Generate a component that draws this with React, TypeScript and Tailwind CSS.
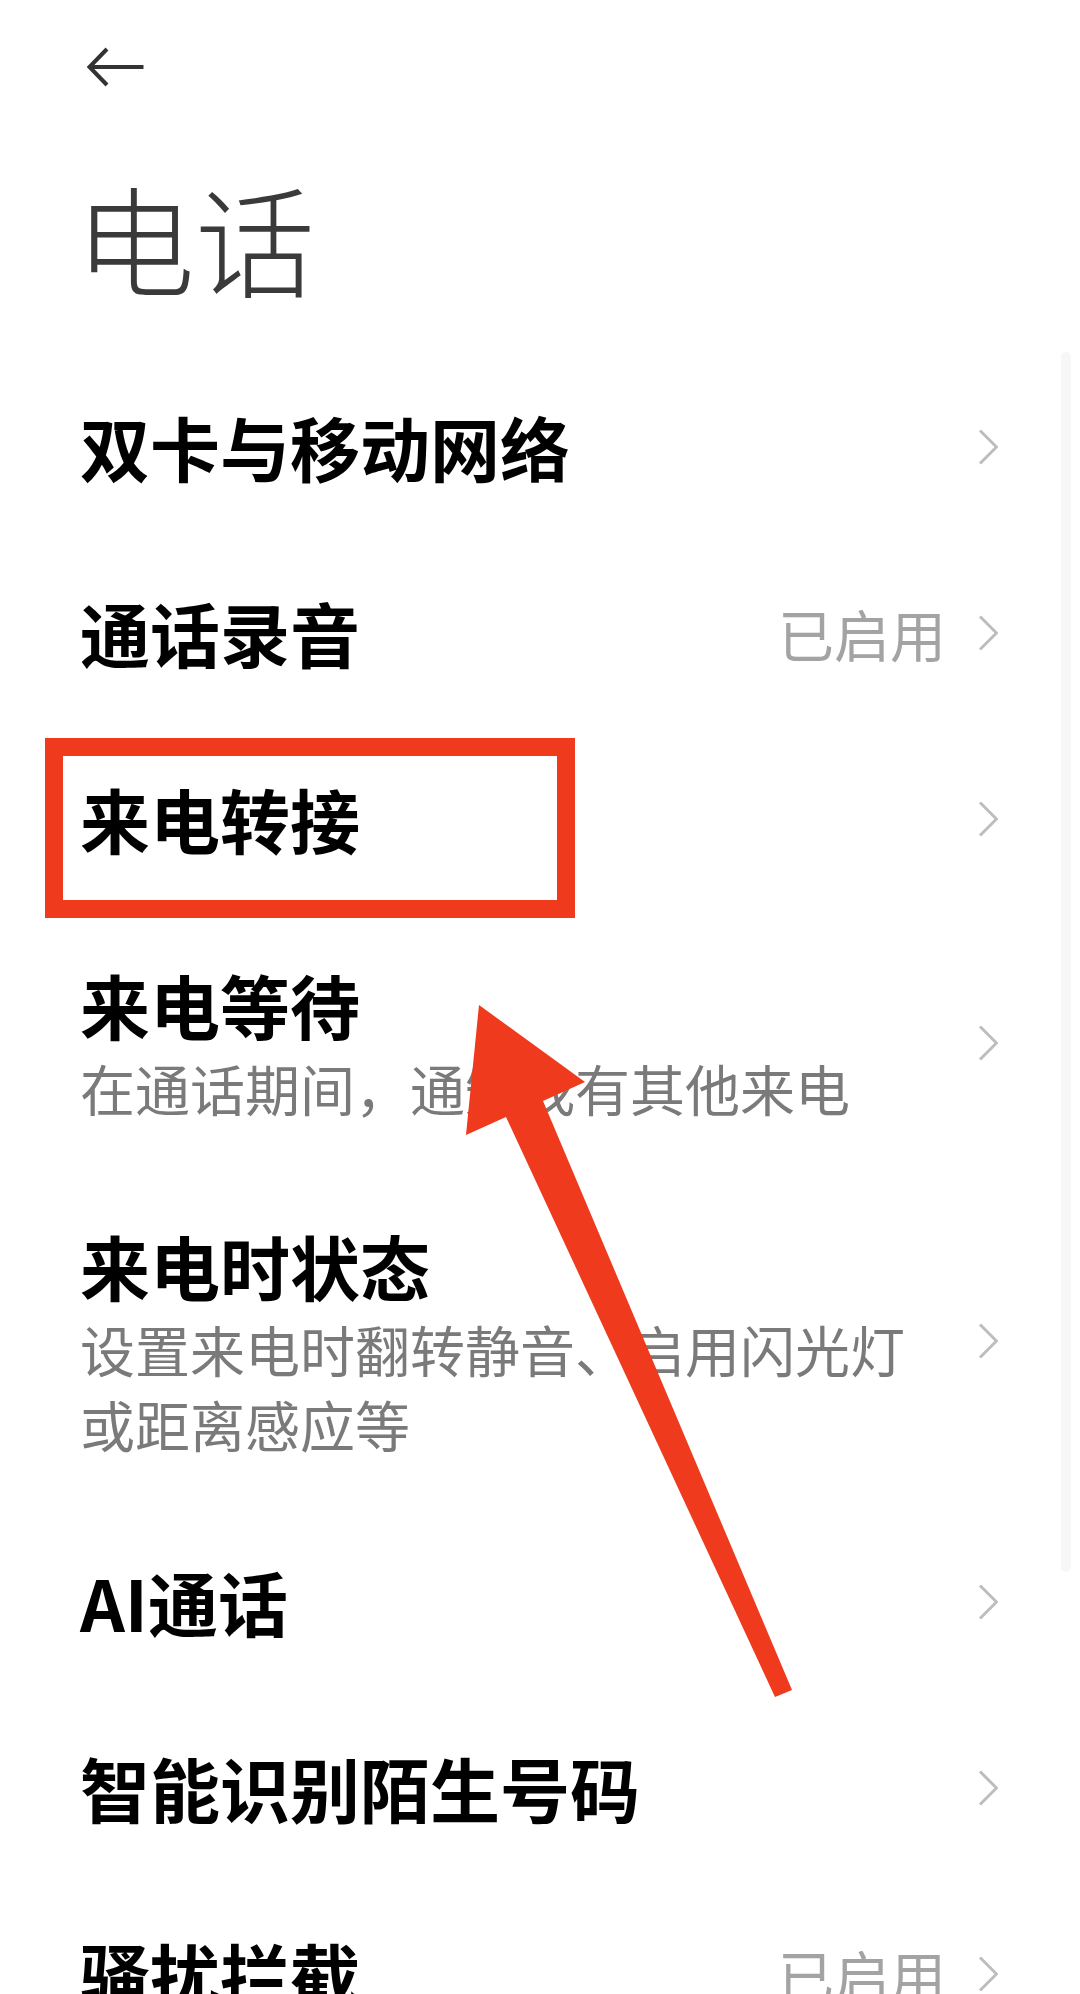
import React from "react";

type Row = { title: string; value?: string; sub?: string };

const rows: Row[] = [
  { title: "双卡与移动网络" },
  { title: "通话录音", value: "已启用" },
  { title: "来电转接" },
  { title: "来电等待", sub: "在通话期间，通知我有其他来电" },
  { title: "来电时状态", sub: "设置来电时翻转静音、启用闪光灯或距离感应等" },
  { title: "AI通话" },
  { title: "智能识别陌生号码" },
  { title: "骚扰拦截", value: "已启用" },
];

function Chevron() {
  return (
    <svg width="20" height="36" viewBox="0 0 20 36" className="shrink-0">
      <path d="M2 1.5 L18.5 18 L2 34.5" fill="none" stroke="#bdbdbd" strokeWidth="3" />
    </svg>
  );
}

export default function App() {
  return (
    <div className="relative h-[1994px] w-[1080px] overflow-hidden bg-white font-['Noto_Sans_CJK_SC',sans-serif]">
      {/* header */}
      <div className="pl-[86px] pt-[47px]">
        <svg width="60" height="40" viewBox="0 0 60 40">
          <path d="M57.5 20 H4" fill="none" stroke="#333333" strokeWidth="4" />
          <path d="M21 2 L3.5 20 L21 38" fill="none" stroke="#333333" strokeWidth="4" />
        </svg>
      </div>
      <h1 className="mt-[80px] pl-[75px] text-[120px] leading-[140px] font-light text-[#3a3a3a]">电话</h1>

      {/* list */}
      <div className="mt-[47px] flex flex-col">
        {rows.map((r) => (
          <div key={r.title} className="flex items-center py-[48px] pl-[80px] pr-[82px]">
            <div className="flex-1 min-w-0">
              <div className="text-[70px] leading-[90px] font-bold text-black">{r.title}</div>
              {r.sub && (
                <div className="max-w-[860px] text-[55px] leading-[75px] text-[#7a7a7a]">{r.sub}</div>
              )}
            </div>
            {r.value && (
              <span className="mr-[32px] text-[56px] leading-[90px] text-[#a3a3a3]">{r.value}</span>
            )}
            <Chevron />
          </div>
        ))}
      </div>

      {/* faint scroll indicator */}
      <div className="absolute left-[1061px] top-[352px] h-[1220px] w-[10px] rounded-full bg-[#f7f7f7]" />

      {/* annotation box */}
      <div className="absolute left-[45px] top-[738px] h-[180px] w-[530px] border-[18px] border-[#ef3a1d]" />

      {/* annotation arrow */}
      <svg className="pointer-events-none absolute left-0 top-0" width="1080" height="1994" viewBox="0 0 1080 1994">
        <polygon
          points="479,1005 585,1082 543,1101 792,1690 775,1697 506,1117 466,1135"
          fill="#ef3a1d"
        />
      </svg>
    </div>
  );
}
